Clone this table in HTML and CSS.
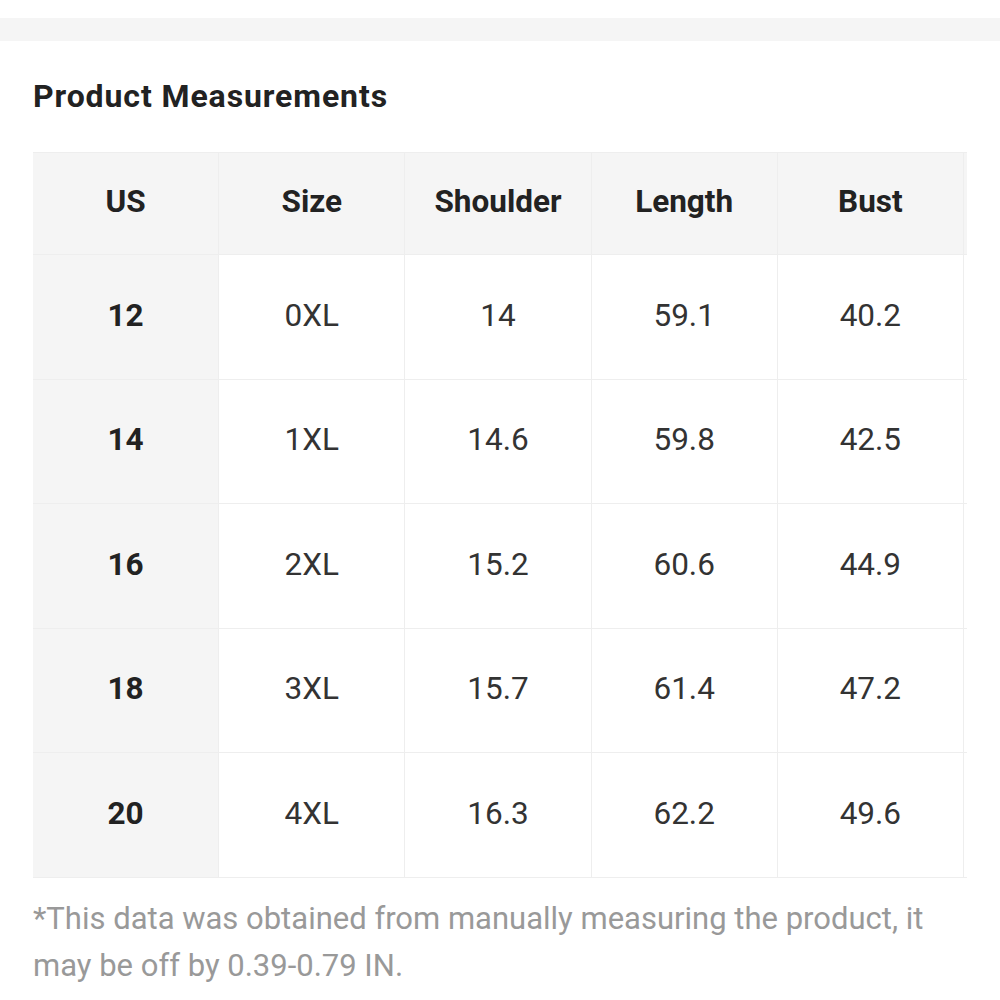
FILE: index.html
```html
<!DOCTYPE html>
<html>
<head>
<meta charset="utf-8">
<link rel="stylesheet" href="styles.css">
</head>
<body>
<div class="topbar"></div>
<section class="panel">
  <h2 class="title">Product Measurements</h2>
  <div class="table-wrap">
    <table class="sizes">
      <thead>
        <tr><th>US</th><th>Size</th><th>Shoulder</th><th>Length</th><th>Bust</th><th class="peek"></th></tr>
      </thead>
      <tbody>
        <tr><th>12</th><td>0XL</td><td>14</td><td>59.1</td><td>40.2</td><td class="peek"></td></tr>
        <tr><th>14</th><td>1XL</td><td>14.6</td><td>59.8</td><td>42.5</td><td class="peek"></td></tr>
        <tr><th>16</th><td>2XL</td><td>15.2</td><td>60.6</td><td>44.9</td><td class="peek"></td></tr>
        <tr><th>18</th><td>3XL</td><td>15.7</td><td>61.4</td><td>47.2</td><td class="peek"></td></tr>
        <tr><th>20</th><td>4XL</td><td>16.3</td><td>62.2</td><td>49.6</td><td class="peek"></td></tr>
      </tbody>
    </table>
  </div>
  <p class="note">*This data was obtained from manually measuring the product, it may be off by 0.39-0.79 IN.</p>
</section>
</body>
</html>
```

FILE: styles.css
```css
html, body {
  margin: 0;
  padding: 0;
  background: #fff;
  font-family: Roboto, "Liberation Sans", sans-serif;
  color: #222;
}
.topbar {
  margin-top: 18px;
  height: 23px;
  background: #f5f5f5;
}
.panel {
  padding: 0 33px;
}
.title {
  margin: 35px 0 0 0;
  font-size: 32px;
  font-weight: 700;
  line-height: 40px;
  letter-spacing: 0.9px;
  color: #222;
}
.table-wrap {
  margin-top: 36px;
  width: 934px;
  overflow: hidden;
}
.sizes {
  border-collapse: collapse;
  table-layout: fixed;
  width: 1116px;
}
.sizes th, .sizes td {
  width: 185.2px;
  text-align: center;
  padding: 0;
  border: 1px solid #eeeeee;
  font-size: 31.5px;
}
.sizes thead th {
  height: 96px;
  padding-bottom: 5px;
  background: #f5f5f5;
  font-weight: 700;
  color: #222;
}
.sizes tbody th, .sizes tbody td {
  height: 120px;
  padding-bottom: 3.5px;
}
.sizes tbody th {
  background: #f5f5f5;
  font-weight: 700;
  color: #222;
}
.sizes tbody td {
  font-weight: 400;
  color: #333;
}
.sizes tr > :first-child {
  border-left: none;
}
.note {
  margin: 17px 0 0 0;
  font-size: 31px;
  line-height: 47px;
  color: #999;
}
```
